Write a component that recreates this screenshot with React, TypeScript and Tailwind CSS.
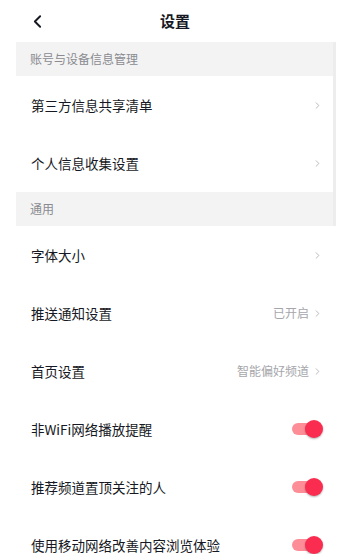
import { ChevronLeft, ChevronRight } from "lucide-react";

type Row =
  | { kind: "link"; label: string; value?: string }
  | { kind: "toggle"; label: string; on: boolean };

const SECTIONS: { title: string; rows: Row[] }[] = [
  {
    title: "账号与设备信息管理",
    rows: [
      { kind: "link", label: "第三方信息共享清单" },
      { kind: "link", label: "个人信息收集设置" },
    ],
  },
  {
    title: "通用",
    rows: [
      { kind: "link", label: "字体大小" },
      { kind: "link", label: "推送通知设置", value: "已开启" },
      { kind: "link", label: "首页设置", value: "智能偏好频道" },
      { kind: "toggle", label: "非WiFi网络播放提醒", on: true },
      { kind: "toggle", label: "推荐频道置顶关注的人", on: true },
      { kind: "toggle", label: "使用移动网络改善内容浏览体验", on: true },
    ],
  },
];

function Toggle() {
  return (
    <div className="relative w-[32px] h-[18px] flex items-center">
      <div className="ml-[1px] w-[26px] h-[12px] rounded-full bg-[#fd8e97]" />
      <div className="absolute right-0 top-0 w-[18px] h-[18px] rounded-full bg-[#fa2c50] shadow-[0_1px_2px_rgba(0,0,0,0.3)]" />
    </div>
  );
}

export default function App() {
  return (
    <div
      className="w-[350px] h-[554px] bg-white overflow-hidden text-[#161823]"
      style={{ fontFamily: '"Noto Sans CJK SC", "Noto Sans", sans-serif' }}
    >
      <div className="relative h-[42px] flex items-center justify-center">
        <ChevronLeft className="absolute left-[27px] top-[11px] w-[21px] h-[21px]" strokeWidth={2.2} />
        <span className="text-[15px] font-bold">设置</span>
      </div>

      <div className="relative">
        <div className="ml-4 w-[317px]">
          {SECTIONS.map((section) => (
            <div key={section.title}>
              <div className="h-[34px] bg-[#f3f3f3] flex items-center pl-[14px] text-[12px] text-[#8a8b91]">
                {section.title}
              </div>
              {section.rows.map((row) => (
                <div key={row.label} className="h-[58px] flex items-center justify-between pl-[15px] pr-[10px]">
                  <span className="text-[13.5px]">{row.label}</span>
                  {row.kind === "link" ? (
                    <div className="flex items-center gap-[3px] text-[12px] text-[#a5a6ab]">
                      {row.value && <span>{row.value}</span>}
                      <ChevronRight className="w-[11px] h-[11px] text-[#b4b5b9]" strokeWidth={2} />
                    </div>
                  ) : (
                    <Toggle />
                  )}
                </div>
              ))}
            </div>
          ))}
        </div>
        <div className="absolute left-[333px] top-0 w-[3px] h-[184px] bg-black/[0.07]" />
      </div>
    </div>
  );
}
